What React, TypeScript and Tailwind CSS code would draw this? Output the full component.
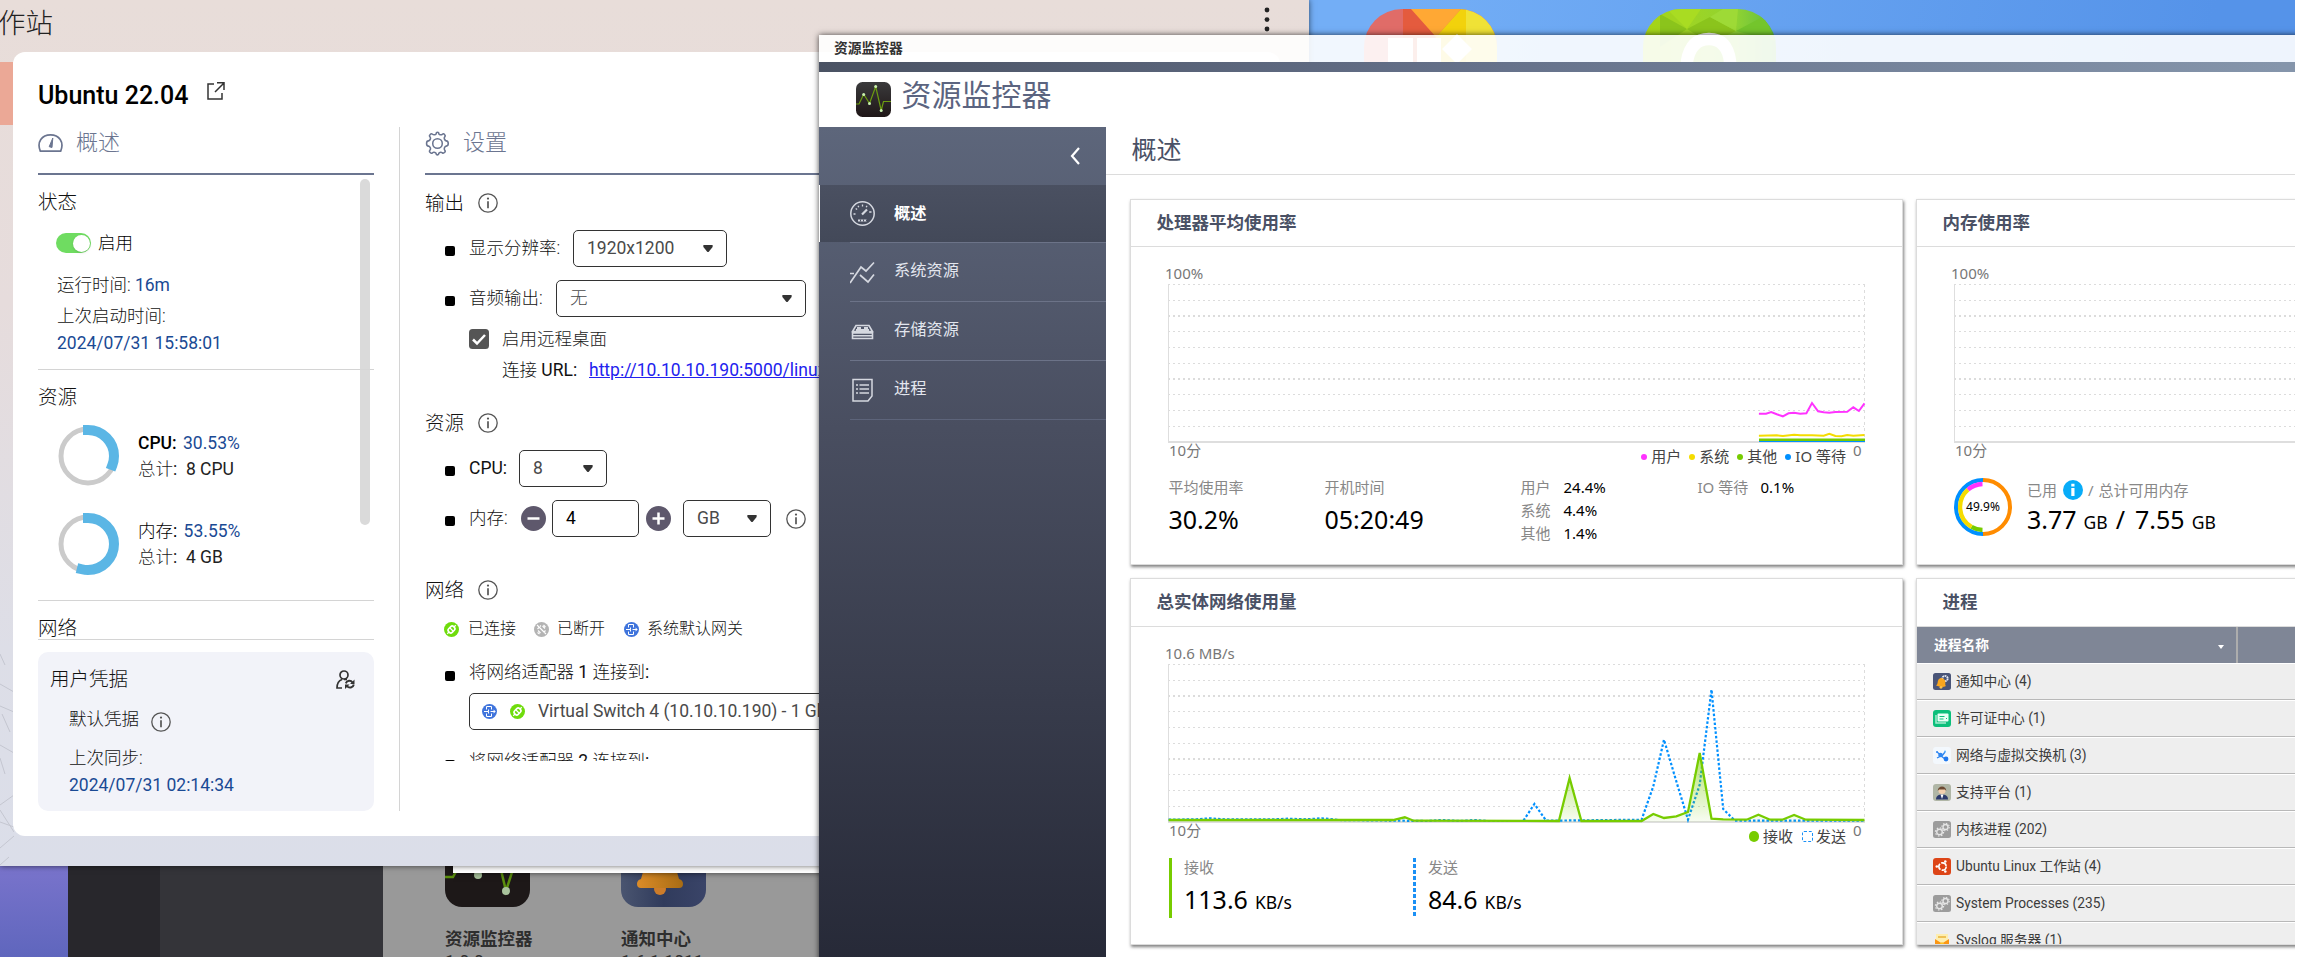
import type { ReactNode } from "react";

type Pt = [number, number];

const toPath = (pts: Pt[]) =>
  pts.map(([x, y], i) => `${i ? "L" : "M"}${((x - 95) / 1.96 + 0.6).toFixed(1)} ${((y - 313) / 3).toFixed(1)}`).join(" ");

/* ---------- small icons ---------- */

function Info({ className = "" }: { className?: string }) {
  return (
    <svg className={`h-5 w-5 shrink-0 ${className}`} viewBox="0 0 20 20" fill="none" stroke="#555" strokeWidth="1.3">
      <circle cx="10" cy="10" r="9.2" />
      <path d="M10 8.2V15.2" strokeWidth="1.7" />
      <circle cx="10" cy="5.6" r="1.1" fill="#555" stroke="none" />
    </svg>
  );
}

function Plug({ className = "" }: { className?: string }) {
  return (
    <svg className={`h-[15px] w-[15px] shrink-0 ${className}`} viewBox="0 0 15 15">
      <circle cx="7.5" cy="7.5" r="7.5" fill="#6fdc0c" />
      <g transform="rotate(-45 7.5 7.5)" fill="none" stroke="#fff" strokeWidth="1.6">
        <rect x="4" y="5" width="7" height="5" rx="2" />
        <path d="M1.5 7.5H4M11 7.5h2.5M7.5 5v5" strokeWidth="1.2" />
      </g>
    </svg>
  );
}

function Unplugged({ className = "" }: { className?: string }) {
  return (
    <svg className={`h-[15px] w-[15px] shrink-0 ${className}`} viewBox="0 0 15 15">
      <circle cx="7.5" cy="7.5" r="7.5" fill="#b4b4b4" />
      <g fill="none" stroke="#fff" strokeWidth="1.1">
        <path d="M3 3l9 9M4 8.5l2.5 2.5M3.5 10.5l2 1.5M8.5 4l2.5 2.5M9.5 3l2 2M3.5 7l1.5-1.5M10 10l1.5-1.5M6 4.5L7 3.5" />
      </g>
    </svg>
  );
}

function Gateway({ className = "" }: { className?: string }) {
  return (
    <svg className={`h-[15px] w-[15px] shrink-0 ${className}`} viewBox="0 0 15 15">
      <circle cx="7.5" cy="7.5" r="7.5" fill="#3f74dc" />
      <g fill="none" stroke="#fff" strokeWidth="1">
        <path d="M4.500 5.500v-3h5v3M4.500 9.500v3h5v-3M2 7.500h4.500v-2M6.500 7.500v2M8.500 7.500H13M11.500 5.800L13 7.500l-1.500 1.700" />
      </g>
    </svg>
  );
}

function Caret() {
  return (
    <svg className="h-[7px] w-[10px] shrink-0" viewBox="0 0 10 7">
      <path d="M.3.6Q.4 0 1 0h8q.6 0 .7.6L9.6 2 6 6.4Q5 7.4 4 6.4L.4 2z" fill="#333" />
    </svg>
  );
}

function MonitorIcon({ className = "" }: { className?: string }) {
  return (
    <svg className={className} viewBox="0 0 35 35">
      <defs>
        <linearGradient id="mi" x1="0" y1="0" x2="0" y2="1">
          <stop offset="0" stopColor="#3a3a3c" />
          <stop offset="1" stopColor="#1f1617" />
        </linearGradient>
      </defs>
      <rect width="35" height="35" rx="6.5" fill="url(#mi)" />
      <path d="M0 22h3l4.700-9.700L13.500 21.500 19.700 4.500 25.200 28.500 27.500 19.500H35" fill="none" stroke="#6c9c10" strokeWidth="1.2" />
      <g fill="#c9f0b0">
        <circle cx="7.700" cy="12.500" r="1.500" />
        <circle cx="13.500" cy="21.500" r="1.500" />
        <circle cx="19.700" cy="4.500" r="1.500" />
        <circle cx="25.200" cy="28.500" r="1.500" />
      </g>
    </svg>
  );
}

/* ---------- station window ---------- */

function Bullet({ className = "" }: { className?: string }) {
  return <span className={`ml-5 mr-[14px] h-[10px] w-[10px] shrink-0 rounded-[2px] bg-black ${className}`} />;
}

function Select({ className, children }: { className: string; children: ReactNode }) {
  return (
    <div className={`flex h-[37px] shrink-0 items-center justify-between rounded-[5px] border border-[#333] pl-[13px] pr-[13px] text-[#4a4a4a] ${className}`}>
      <span>{children}</span>
      <Caret />
    </div>
  );
}

function Usage({ pct, label, total, bold, className }: { pct: number; label: string; total: string; bold?: boolean; className: string }) {
  const c = 2 * Math.PI * 26;
  return (
    <div className={`flex h-[62px] shrink-0 pl-[19px] ${className}`}>
      <svg className="h-[62px] w-[62px]" viewBox="0 0 62 62" fill="none">
        <circle cx="31" cy="31" r="27" stroke="#cbcbcb" strokeWidth="5" />
        <circle
          cx="31"
          cy="31"
          r="26"
          stroke="#5bb6e5"
          strokeWidth="10"
          strokeLinecap="square"
          strokeDasharray={`${(c * pct) / 100} ${c}`}
          transform="rotate(-90 31 31)"
        />
      </svg>
      <div className="ml-[19px] pt-[5px]">
        <div className="h-[26px] leading-[26px]">
          <span className={bold ? "font-medium text-black" : "text-black"}>{label}:</span>{" "}
          <span className="ml-[2px] text-[#1a4a94]">{pct}%</span>
        </div>
        <div className="h-[26px] leading-[26px] text-[#222]">总计:&nbsp; {total}</div>
      </div>
    </div>
  );
}

function StationWindow() {
  return (
    <div className="absolute left-0 top-0 h-[866px] w-[1309px] bg-[linear-gradient(180deg,#e8ddd9_0%,#e6dcdc_35%,#dddee7_75%,#dbdee9_100%)] font-['Roboto','Noto_Sans_CJK_SC_Light','Noto_Sans_CJK_SC',sans-serif] text-[17.5px] text-[#111] shadow-[0_0_6px_rgba(0,0,0,0.6)]">
      <div className="absolute left-[-2px] top-[1px] h-[46px] whitespace-nowrap text-[27.5px] font-light leading-[46px] text-[#222]">作站</div>
      <div className="absolute left-0 top-[62px] h-[63px] w-[13px] bg-[#eba896]" />
      <svg className="absolute left-0 top-[640px] h-[226px] w-[14px]" viewBox="0 0 14 226" fill="none" stroke="#c4c6d0" strokeWidth="1">
        <path d="M0 14l5 11M0 44l14 8M0 66l14 6M2 74l8 18M0 105l14 8M0 118l5 16M0 165l14-10M0 170l14 22M0 182l14 5M0 208l14-12M0 225l9-8" />
      </svg>
      <svg className="absolute left-[1263px] top-[5px] h-[30px] w-[8px]" viewBox="0 0 8 30" fill="#222">
        <circle cx="4" cy="5" r="2.400" />
        <circle cx="4" cy="14.600" r="2.400" />
        <circle cx="4" cy="24" r="2.400" />
      </svg>

      <div className="absolute left-[13px] top-[52px] flex h-[784px] w-[1267px] flex-col overflow-hidden rounded-[12px] bg-white pl-[25px]">
        <div className="flex h-[75px] items-start pt-[21px]">
          <h1 className="mt-[1px] h-[44px] w-[169px] whitespace-nowrap text-[25px] font-medium leading-[44px] text-black">Ubuntu 22.04</h1>
          <svg className="mt-[9px] h-[18px] w-[18px]" viewBox="0 0 18 18" fill="none" stroke="#333" strokeWidth="1.500">
            <path d="M7 2H1v15h14v-6M10 .8h7V8M17 1L8 10" />
          </svg>
        </div>
        <div className="flex h-[684px]">
          {/* overview */}
          <div className="flex w-[336px] flex-col">
            <div className="flex h-[46px] shrink-0 text-[22px] text-[#6b7590]">
              <svg className="mt-[7px] h-[18px] w-[25px]" viewBox="0 0 25 18" fill="none" stroke="#6b7590" strokeWidth="1.700">
                <path d="M2.300 17.100C-1.500 8 4 .9 12.500.9S26.500 8 22.700 17.100z" strokeLinejoin="round" />
                <path d="M14.800 4l-.8 9.500-2.800-.8z" fill="#6b7590" strokeWidth="1" />
              </svg>
              <span className="ml-[13px] mt-[1px] h-[30px] font-light leading-[30px]">概述</span>
            </div>
            <div className="h-[2px] shrink-0 bg-[#6b7590]" />
            <div className="relative flex h-[465px] shrink-0 flex-col overflow-hidden border-b border-[#d4d4d4]">
              <div className="mt-3 h-[30px] shrink-0 text-[19.500px] font-light leading-[32px]">状态</div>
              <div className="mt-[14px] flex h-6 shrink-0 items-center pl-[18px]">
                <span className="flex h-5 w-[35px] items-center justify-end rounded-full bg-[#6fdc61] pr-[1px]">
                  <span className="h-[17px] w-[17px] rounded-full bg-white shadow" />
                </span>
                <span className="ml-[7px] font-light leading-6 text-black">启用</span>
              </div>
              <div className="mt-[17px] h-[26px] shrink-0 pl-[19px] font-light leading-[26px]">
                运行时间: <span className="font-normal text-[#1a4a94]">16m</span>
              </div>
              <div className="mt-[5px] h-[26px] shrink-0 pl-[19px] font-light leading-[26px]">上次启动时间:</div>
              <div className="mt-[1px] h-[26px] shrink-0 pl-[19px] leading-[26px] text-[#1a4a94]">2024/07/31 15:58:01</div>
              <div className="mt-[13px] h-px shrink-0 bg-[#d4d4d4]" />
              <div className="mt-3 h-[30px] shrink-0 text-[19.500px] font-light leading-[32px]">资源</div>
              <Usage className="mt-[13px]" pct={30.53} label="CPU" total="8 CPU" bold />
              <Usage className="mt-[26px]" pct={53.55} label="内存" total="4 GB" />
              <div className="mt-[25px] h-px shrink-0 bg-[#d4d4d4]" />
              <div className="mt-3 h-[30px] shrink-0 text-[19.500px] font-light leading-[32px]">网络</div>
              <div className="absolute left-[322px] top-[4px] h-[346px] w-[10px] rounded-full bg-[#d6d6d6]/90" />
            </div>
            <div className="mt-[12px] flex h-[159px] shrink-0 flex-col rounded-[10px] bg-[#f2f3f9]">
              <div className="mt-3 flex h-[30px] items-center justify-between pl-3 pr-[19px] text-[19.500px] font-light leading-[30px]">
                <span className="pt-[2px]">用户凭据</span>
                <svg className="h-[19px] w-[19px]" viewBox="0 0 19 19" fill="none" stroke="#333" strokeWidth="1.700">
                  <circle cx="8" cy="5" r="4" />
                  <path d="M6 18H1c0-5 2-7.500 5-8.500M8 9.500h3" />
                  <path d="M9.800 13.300a3.800 3.800 0 0 1 6.700-.8M17.800 14.500a3.800 3.800 0 0 1-6.800 1.500" strokeWidth="2" />
                  <path d="M18.500 9.500v4.500h-4.500zM9 19v-4.500h4.500z" fill="#333" stroke="none" />
                </svg>
              </div>
              <div className="mt-3 flex h-[26px] items-center pl-[31px] font-light leading-[26px]">
                默认凭据
                <Info className="ml-[12px] mt-[5px]" />
              </div>
              <div className="mt-[13px] h-[26px] pl-[31px] font-light leading-[26px]">上次同步:</div>
              <div className="mt-[1px] h-[26px] pl-[31px] leading-[26px] text-[#1a4a94]">2024/07/31 02:14:34</div>
            </div>
          </div>
          <div className="ml-[25px] w-px shrink-0 bg-[#d4d4d4]" />
          {/* settings */}
          <div className="ml-[25px] flex h-[634px] w-[830px] flex-col overflow-hidden whitespace-nowrap">
            <div className="flex h-[46px] shrink-0 text-[22px] text-[#6b7590]">
              <svg className="mt-[4px] h-[25px] w-[25px]" viewBox="0 0 24 24" fill="none" stroke="#6b7590" strokeWidth="1.500" strokeLinejoin="round">
                <circle cx="12" cy="12" r="4.600" />
                <path d="M9.700 3.500Q11 3.200 11 1.600q1-.9 2 0 0 1.600 1.300 1.900 1.500.5 2.400-.4 1-1 2 .2 1.200 1.200.3 2.200-.8 1-.3 2.300.5 1.400 1.700 1.700 1.900.1 1.900 2.500t-1.900 2.500q-1.200.3-1.700 1.600-.5 1.400.3 2.400.9 1-.3 2.200-1 1-2.200.2-1-.9-2.300-.3-1.200.5-1.300 1.900-1 .9-2 0 0-1.600-1.200-1.900-1.500-.6-2.500.3-1.100.9-2.200-.2-1.200-1.200-.3-2.200.9-1 .4-2.400-.6-1.300-1.800-1.600-1.800 0-1.800-2.500t1.800-2.500q1.300-.3 1.800-1.700.5-1.300-.4-2.300-.9-1 .3-2.200 1.100-1.200 2.200-.2 1 .9 2.500.4z" />
              </svg>
              <span className="ml-[13px] mt-[1px] h-[30px] font-light leading-[30px]">设置</span>
            </div>
            <div className="h-[2px] shrink-0 bg-[#6b7590]" />
            <div className="mt-[13px] flex h-[30px] shrink-0 items-center text-[19.500px] font-light leading-[30px]">
              <span className="pt-[2px]">输出</span> <Info className="ml-[14px]" />
            </div>
            <div className="mt-3 flex h-[37px] shrink-0 items-center">
              <Bullet className="mt-[4px]" />
              <span className="w-[104px] font-light">显示分辨率:</span>
              <Select className="w-[154px]">1920x1200</Select>
            </div>
            <div className="mt-[13px] flex h-[37px] shrink-0 items-center">
              <Bullet className="mt-[4px]" />
              <span className="w-[87px] font-light">音频输出:</span>
              <Select className="w-[250px] font-light">无</Select>
            </div>
            <div className="mt-3 flex h-5 shrink-0 items-center pl-[44px] text-[#222]">
              <svg className="h-5 w-5" viewBox="0 0 20 20">
                <rect width="20" height="20" rx="3.500" fill="#555" />
                <path d="M4 10.500l4 4 8-8.500" fill="none" stroke="#fff" strokeWidth="2.500" />
              </svg>
              <span className="ml-[13px] font-light">启用远程桌面</span>
            </div>
            <div className="mt-2 flex h-[26px] shrink-0 items-center pl-[77px]">
              <span className="w-[87px]">连接 URL:</span>
              <span className="text-[#2222ee] underline">http://10.10.10.190:5000/linux-station/</span>
            </div>
            <div className="mt-[25px] flex h-[30px] shrink-0 items-center text-[19.500px] font-light leading-[30px]">
              <span className="pt-[2px]">资源</span> <Info className="ml-[14px]" />
            </div>
            <div className="mt-3 flex h-[37px] shrink-0 items-center">
              <Bullet className="mt-[4px]" />
              <span className="w-[50px]">CPU:</span>
              <Select className="w-[88px]">8</Select>
            </div>
            <div className="mt-[13px] flex h-[37px] shrink-0 items-center">
              <Bullet className="mt-[4px]" />
              <span className="w-[52px] font-light">内存:</span>
              <svg className="h-[25px] w-[25px]" viewBox="0 0 25 25">
                <circle cx="12.500" cy="12.500" r="12.500" fill="#5e586c" />
                <path d="M6.500 12.500h12" stroke="#fff" strokeWidth="2.500" />
              </svg>
              <span className="ml-[6px] flex h-[37px] w-[87px] items-center rounded-[5px] border border-[#333] pl-[13px] text-black">4</span>
              <svg className="ml-[7px] h-[25px] w-[25px]" viewBox="0 0 25 25">
                <circle cx="12.500" cy="12.500" r="12.500" fill="#5e586c" />
                <path d="M6.500 12.500h12M12.500 6.500v12" stroke="#fff" strokeWidth="2.500" />
              </svg>
              <span className="w-3" />
              <Select className="w-[88px]">GB</Select>
              <Info className="ml-[15px]" />
            </div>
            <div className="mt-[38px] flex h-[30px] shrink-0 items-center text-[19.500px] font-light leading-[30px]">
              <span className="pt-[1px]">网络</span> <Info className="ml-[14px]" />
            </div>
            <div className="mt-3 flex h-6 shrink-0 items-center pl-[19px] text-[16px] font-light">
              <Plug />
              <span className="ml-[9px] w-[66px]">已连接</span>
              <Unplugged />
              <span className="ml-[8px] w-[67px]">已断开</span>
              <Gateway />
              <span className="ml-[8px]">系统默认网关</span>
            </div>
            <div className="mt-[18px] flex h-[26px] shrink-0 items-center">
              <Bullet className="mt-[8px]" />
              将网络适配器 1 连接到:
            </div>
            <div className="ml-[44px] mt-2 flex h-[37px] w-[500px] shrink-0 items-center rounded-[5px] border border-[#333] pl-3 text-[#4a4a4a]">
              <Gateway />
              <Plug className="ml-[13px]" />
              <span className="ml-[13px] tracking-[-0.04px]">Virtual Switch 4 (10.10.10.190) - 1 GbE</span>
            </div>
            <div className="mt-[18px] flex h-[26px] shrink-0 items-center">
              <Bullet className="mt-[8px]" />
              将网络适配器 2 连接到:
            </div>
          </div>
        </div>
      </div>
    </div>
  );
}

/* ---------- resource monitor ---------- */

const gridYs = [0, 16, 31.5, 47, 63, 79, 94.5, 110, 126, 142];

function Plot({ open, children }: { open?: boolean; children?: ReactNode }) {
  return (
    <svg className="h-[160px] w-[697px] shrink-0 overflow-visible" viewBox="0 0 697 160" fill="none">
      <g stroke="#dcdcdc" strokeDasharray="2 3" shapeRendering="crispEdges">
        {gridYs.map((y, i) => (
          <path key={y} d={`M0 ${Math.floor(y) + (i === 2 || i === 6 ? 1 : 0.5)}H696`} strokeWidth={i === 2 || i === 6 ? 2 : 1} />
        ))}
        {!open && <path d="M696.500 0V158" strokeDasharray="3 3" />}
      </g>
      <path d="M.5 0V158" stroke="#dedede" />
      <path d="M0 158H697" stroke="#dedede" strokeWidth="2" />
      {children}
    </svg>
  );
}

const user: Pt[] = [[1252, 702], [1266, 702], [1276, 697], [1287, 704], [1299, 710], [1310, 701], [1321, 699], [1333, 702], [1345, 701], [1356, 670], [1368, 695], [1379, 698], [1390, 699], [1402, 697], [1425, 696], [1437, 683], [1448, 694], [1459, 671]];
const sys: Pt[] = [[1252, 768], [1287, 767], [1299, 769], [1321, 765], [1333, 767], [1356, 767], [1379, 768], [1390, 762], [1402, 769], [1414, 770], [1425, 766], [1437, 768], [1459, 766]];
const received: Pt[] = [[95, 781], [535, 781], [558, 773], [575, 783], [860, 784], [881, 655], [904, 784], [1022, 784], [1045, 763], [1066, 775], [1090, 770], [1113, 757], [1136, 580], [1159, 777], [1182, 779], [1228, 780], [1251, 765], [1274, 780], [1298, 780], [1321, 766], [1344, 780], [1459, 781]];
const sent: Pt[] = [[95, 780], [150, 779], [175, 776], [205, 779], [300, 779], [330, 777], [365, 779], [395, 776], [430, 781], [600, 784], [630, 781], [665, 784], [697, 781], [720, 784], [790, 784], [812, 733], [835, 783], [1022, 780], [1045, 680], [1066, 540], [1090, 665], [1113, 780], [1136, 675], [1159, 390], [1182, 748], [1205, 783], [1459, 783]];

function Card({ title, className, headClass = "h-[47px]", children }: { title: string; className: string; headClass?: string; children: ReactNode }) {
  return (
    <section className={`flex shrink-0 flex-col overflow-hidden border border-[#dcdcdc] bg-white shadow-[1px_2px_3px_rgba(0,0,0,0.5)] ${className}`}>
      <h3 className={`flex shrink-0 items-center border-b border-[#dcdcdc] pb-[2px] pl-[25.500px] text-[17.500px] font-bold text-[#4a5165] ${headClass}`}>{title}</h3>
      {children}
    </section>
  );
}

function Axis({ legend }: { legend?: ReactNode }) {
  return (
    <div className="ml-[38px] flex h-[24px] w-[697px] items-start text-[15px] leading-[13px] text-[#777]">
      <span className="grow">10分</span>
      {legend}
    </div>
  );
}

const dots = [
  { c: "bg-[#ff33ff]", t: "用户" },
  { c: "bg-[#f5dc00]", t: "系统" },
  { c: "bg-[#77cc00]", t: "其他" },
  { c: "bg-[#0090ff]", t: "IO 等待" },
];

function CpuCard() {
  return (
    <Card title="处理器平均使用率" className="h-[366px] w-[773px]">
      <div className="h-[37px] pl-[34px] pt-[14px] text-[15px] leading-6 text-[#777]">100%</div>
      <div className="ml-[37px]">
        <Plot>
          <path d="M591 157.500H697" stroke="#0090ff" strokeWidth="1" />
          <path d="M591 155.700H697" stroke="#77cc00" strokeWidth="2.500" />
          <path d={toPath(sys)} stroke="#f5dc00" strokeWidth="2" />
          <path d={toPath(user)} stroke="#ff33ff" strokeWidth="2" />
        </Plot>
      </div>
      <Axis
        legend={
          <>
            <span className="flex pt-[6px] text-[#444]">
              {dots.map((d) => (
                <span key={d.t} className="ml-[8px] flex items-center">
                  <i className={`mr-[4px] h-[6px] w-[6px] rounded-full ${d.c}`} />
                  {d.t}
                </span>
              ))}
            </span>
            <span className="ml-[7px] w-[13px]">0</span>
          </>
        }
      />
      <div className="mt-[7px] flex pl-[37.500px] text-[15px] text-[#888]">
        <div className="w-[156px]">
          <div className="h-6 leading-6">平均使用率</div>
          <div className="mt-[3px] h-[34px] text-[25px] leading-[34px] text-black">30.2%</div>
        </div>
        <div className="w-[196px]">
          <div className="h-6 leading-6">开机时间</div>
          <div className="mt-[3px] h-[34px] text-[25px] leading-[34px] text-black">05:20:49</div>
        </div>
        <div className="w-[177px]">
          {[["用户", "24.4%"], ["系统", "4.4%"], ["其他", "1.4%"]].map(([k, v]) => (
            <div key={k} className="flex h-[23px] leading-6">
              <span className="w-[43px]">{k}</span>
              <span className="text-black">{v}</span>
            </div>
          ))}
        </div>
        <div className="flex h-6 leading-6">
          <span className="w-[63px]">IO 等待</span>
          <span className="text-black">0.1%</span>
        </div>
      </div>
    </Card>
  );
}

function NetCard() {
  return (
    <Card title="总实体网络使用量" className="h-[367px] w-[773px]" headClass="h-[48px]">
      <div className="h-[37px] pl-[34px] pt-[14px] text-[15px] leading-6 text-[#777]">10.6 MB/s</div>
      <div className="ml-[37px]">
        <Plot>
          <defs>
            <linearGradient id="rx" x1="0" y1="85" x2="0" y2="158" gradientUnits="userSpaceOnUse">
              <stop offset="0" stopColor="#77cc00" stopOpacity=".6" />
              <stop offset="1" stopColor="#77cc00" stopOpacity=".05" />
            </linearGradient>
          </defs>
          <path d={toPath(sent)} stroke="#0090ff" strokeWidth="2.200" strokeDasharray="2.500 2" />
          <path d={`${toPath(received)} V158H0z`} fill="url(#rx)" />
          <path d={toPath(received)} stroke="#77cc00" strokeWidth="2.300" />
        </Plot>
      </div>
      <Axis
        legend={
          <>
            <span className="flex items-center pt-[6px] text-[#444]">
              <i className="mr-[4px] h-[11px] w-[10px] rounded-full bg-[#77cc00]" />
              接收
              <i className="ml-[9px] mr-[3px] h-[11px] w-[11px] rounded-[2px] border border-dashed border-[#1b90f5]" />
              发送
            </span>
            <span className="ml-[7px] w-[13px]">0</span>
          </>
        }
      />
      <div className="mt-[7px] flex pl-[37.500px] text-[15px] text-[#888]">
        <div className="flex w-[244px]">
          <span className="mt-[3px] h-[60px] w-[3px] bg-[#77cc00]" />
          <div className="ml-[12.500px]">
            <div className="h-6 leading-6">接收</div>
            <div className="mt-[3px] h-[34px] text-[25px] leading-[34px] text-black">
              113.6<span className="ml-[7px] text-[17.500px]">KB/s</span>
            </div>
          </div>
        </div>
        <div className="flex">
          <span className="mt-[3px] h-[60px] w-[3px] bg-[repeating-linear-gradient(180deg,#1b90f5_0_4px,#fff_4px_6px)]" />
          <div className="ml-[12.500px]">
            <div className="h-6 leading-6">发送</div>
            <div className="mt-[3px] h-[34px] text-[25px] leading-[34px] text-black">
              84.6<span className="ml-[7px] text-[17.500px]">KB/s</span>
            </div>
          </div>
        </div>
      </div>
    </Card>
  );
}

function MemCard() {
  return (
    <Card title="内存使用率" className="h-[366px] w-[773px]">
      <div className="h-[37px] pl-[34px] pt-[14px] text-[15px] leading-6 text-[#777]">100%</div>
      <div className="ml-[37px]">
        <Plot open />
      </div>
      <Axis />
      <div className="mt-[10px] flex pl-[37px] text-[15px] text-[#888]">
        <svg className="h-[58px] w-[58px]" viewBox="0 0 58 58" fill="none">
          <path d="M29 2A27 27 0 0 1 29 56" stroke="#ff8c00" strokeWidth="4" />
          <path d="M29 56A27 27 0 0 1 29 2" stroke="#0090ff" strokeWidth="4" />
          <path d="M28.500 52A23 23 0 0 1 17.500 48.900" stroke="#77cc00" strokeWidth="4.300" />
          <path d="M17.500 48.900A23 23 0 0 1 14 11.700" stroke="#f5dc00" strokeWidth="4.300" />
          <path d="M14 11.700A23 23 0 0 1 28.500 6" stroke="#ff33ff" strokeWidth="4.300" />
          <text x="29" y="33" textAnchor="middle" className="fill-black text-[12px]">49.9%</text>
        </svg>
        <div className="ml-[15px]">
          <div className="flex h-[24px] items-center leading-6">
            已用
            <svg className="ml-[6px] mr-[5px] h-5 w-5" viewBox="0 0 20 20">
              <circle cx="10" cy="10" r="10" fill="#08acf8" />
              <path d="M8.300 8H11.500V16H8.300zM8.300 3.800H11.500V6.500H8.300z" fill="#fff" />
            </svg>
            /<span className="ml-[5px]">总计可用内存</span>
          </div>
          <div className="h-[34px] whitespace-nowrap text-[25px] leading-[34px] text-black">
            3.77<span className="ml-[7px] text-[17.500px]">GB</span>
            <span className="ml-[8px] mr-[10px]">/</span>
            7.55<span className="ml-[7px] text-[17.500px]">GB</span>
          </div>
        </div>
      </div>
    </Card>
  );
}

const gears = (
  <>
    <rect width="18" height="17" rx="2.500" fill="#9c9c9c" />
    <g fill="none" stroke="#e6e6e6">
      <circle cx="6.500" cy="11" r="2.800" strokeWidth="1.400" />
      <circle cx="6.500" cy="11" r="4.100" strokeWidth="1.200" strokeDasharray="1.500 1.700" />
      <circle cx="12.500" cy="6" r="2.500" strokeWidth="1.300" />
      <circle cx="12.500" cy="6" r="3.700" strokeWidth="1.100" strokeDasharray="1.400 1.500" />
    </g>
  </>
);

const processes: { t: string; icon: ReactNode }[] = [
  {
    t: "通知中心 (4)",
    icon: (
      <>
        <rect width="18" height="17" rx="2.500" fill="#4a5578" />
        <circle cx="12" cy="5.500" r="2.700" fill="none" stroke="#e8ecf5" strokeWidth="1.800" strokeDasharray="1.800 .6" />
        <path d="M3 12.500c2.500-1.500 1-4.500 3-6.500s5-.5 6 1.500c1 2.500-.5 4 1 5.500-3 1.500-6 1-10-.5z" fill="#f9a61f" />
        <circle cx="8" cy="14.300" r="1.400" fill="#ffc24a" />
      </>
    ),
  },
  {
    t: "许可证中心 (1)",
    icon: (
      <>
        <rect width="18" height="17" rx="3" fill="#0cbf7b" />
        <path d="M3 5v8h10" fill="none" stroke="#a7ebd0" strokeWidth="1.500" />
        <rect x="4.500" y="3.500" width="11" height="8" rx="1" fill="#e9fff6" />
        <path d="M6.500 6.500h5M6.500 9h4M13 8.500h1" stroke="#0cbf7b" strokeWidth="1" />
      </>
    ),
  },
  {
    t: "网络与虚拟交换机 (3)",
    icon: (
      <>
        <rect width="18" height="17" rx="3" fill="#f3f8fd" />
        <path d="M4 5l5 4 3-4M4 11l4-2 4 3" stroke="#2f86f0" strokeWidth="1.300" fill="none" />
        <circle cx="7.500" cy="8" r="2.300" fill="#2f86f0" />
        <circle cx="13" cy="12" r="2.400" fill="#1f78ee" />
        <circle cx="4" cy="5" r="1" fill="#2f86f0" />
        <circle cx="12" cy="4.500" r="1" fill="#5fb4ff" />
      </>
    ),
  },
  {
    t: "支持平台 (1)",
    icon: (
      <>
        <rect width="18" height="17" rx="3" fill="#b0b6a6" />
        <circle cx="9" cy="6.500" r="3.600" fill="#f2cfae" />
        <path d="M4.700 7c0-6 8.600-6 8.600 0l-1.300-1.500H6z" fill="#6b4a33" />
        <path d="M3 15.500c0-4 3-5 6-5s6 1 6 5z" fill="#2c3a6c" />
        <path d="M7.500 10.500h3L9 15z" fill="#fff" />
      </>
    ),
  },
  { t: "内核进程 (202)", icon: gears },
  {
    t: "Ubuntu Linux 工作站 (4)",
    icon: (
      <>
        <rect width="18" height="17" rx="3" fill="#dd4517" />
        <circle cx="9.500" cy="8.500" r="3.700" fill="none" stroke="#fff" strokeWidth="1.700" strokeDasharray="6.500 1.300" />
        <circle cx="3.800" cy="8.500" r="1.300" fill="#fff" />
        <circle cx="12.300" cy="3.500" r="1.300" fill="#fff" />
        <circle cx="12.300" cy="13.500" r="1.300" fill="#fff" />
      </>
    ),
  },
  { t: "System Processes (235)", icon: gears },
  {
    t: "Syslog 服务器 (1)",
    icon: (
      <>
        <path d="M3 2h12v9H3z" fill="#fdeeb0" />
        <path d="M5 5h8" stroke="#e8b23a" strokeWidth="1.500" />
        <path d="M2 7l7 4.500L16 7v9H2z" fill="#fb9612" />
        <path d="M2 16l7-6 7 6z" fill="#ffc21f" />
      </>
    ),
  },
];

function ProcessCard() {
  return (
    <Card title="进程" className="h-[367px] w-[773px]" headClass="h-[48px]">
      <div className="flex h-[36px] shrink-0 items-center bg-[#7f8696] text-[13.750px] font-bold text-white">
        <span className="w-[301px] pl-[17px]">进程名称</span>
        <svg className="mt-[3px] h-[4px] w-[6px]" viewBox="0 0 6 4">
          <path d="M0 0h6L3 4z" fill="#fff" />
        </svg>
        <span className="ml-[12px] h-full w-[2px] bg-[#adadad]" />
      </div>
      <div className="flex flex-col font-['Roboto','Noto_Sans_CJK_SC',sans-serif] text-[13.750px] text-[#3c3c3c]">
        {processes.map((p, i) => (
          <div key={i} className="flex h-[37px] shrink-0 items-center border-b border-t border-b-[#b8b8b8] border-t-white bg-[#eee] pl-[16px]">
            <svg className="h-[17px] w-[18px]" viewBox="0 0 18 17">
              {p.icon}
            </svg>
            <span className="ml-[5px]">{p.t}</span>
          </div>
        ))}
      </div>
    </Card>
  );
}

function NavItem({ label, active, children }: { label: string; active?: boolean; children: ReactNode }) {
  return (
    <div className={active ? "h-[57px] border-l border-white bg-[linear-gradient(180deg,#4a5061,#434959)] pl-[30px]" : "h-[59px] pl-[31px]"}>
      <div className={`flex h-full items-center ${active ? "font-bold text-white" : "border-t border-[#6c7388] text-[#e3e6ee]"}`}>
        <svg className="h-[25px] w-[25px]" viewBox="0 0 25 25" fill="none" stroke="#d5d8e0" strokeWidth="1.500">
          {children}
        </svg>
        <span className={active ? "ml-[19px]" : "ml-[19px] pb-[3px]"}>{label}</span>
      </div>
    </div>
  );
}

function MonitorWindow() {
  return (
    <div className="absolute left-[819px] top-[35px] flex h-[930px] w-[1900px] flex-col font-['Noto_Sans','Noto_Sans_CJK_SC',sans-serif] shadow-[0_0_6px_rgba(0,0,0,0.7)]">
      <div className="flex h-[27px] shrink-0 items-center bg-white/90 pl-[15px] text-[13.750px] font-bold text-[#333]">资源监控器</div>
      <div className="h-[10px] shrink-0 bg-[linear-gradient(90deg,#4a5263,#65718a_35%,#8595ab_77%)]" />
      <div className="flex h-[55px] shrink-0 bg-white pl-[37px] pt-[10px]">
        <MonitorIcon className="h-[35px] w-[35px]" />
        <span className="ml-[10.500px] mt-[-9px] h-[44px] text-[30px] leading-[44px] text-[#5b6480]">资源监控器</span>
      </div>
      <div className="flex h-[838px] shrink-0 bg-white">
        <nav className="w-[287px] shrink-0 bg-[linear-gradient(180deg,#5d667b_0%,#494e60_36%,#262937_100%)] text-[16.250px]">
          <div className="flex h-[58px] items-center justify-end pr-[26px]">
            <svg className="h-[18px] w-[10px]" viewBox="0 0 10 18" fill="none" stroke="#fff" strokeWidth="2.200">
              <path d="M9 1L2 9l7 8" />
            </svg>
          </div>
          <NavItem label="概述" active>
            <circle cx="12.500" cy="12.500" r="11.700" />
            <path d="M12 13.500l5-5M8 19.500h9" strokeWidth="2.200" />
            <path d="M8 19.500h9" stroke="#4a5061" strokeDasharray="1 2" strokeWidth="2.200" strokeDashoffset="-2" />
            <path d="M3.500 13h2M5.700 7.500l1.400 1M12.500 3.500v2M8 4.800l.8 1.500M17 4.800l-.8 1.500M21.500 11h-2.300" strokeWidth="1.300" />
          </NavItem>
          <NavItem label="系统资源">
            <path d="M0 22L11 6l5 4 8-8.500M0 12.500h4M10 14l8 7 6-7.500" strokeWidth="1.700" transform="translate(0 1)" />
          </NavItem>
          <NavItem label="存储资源">
            <path d="M6 6.500h13l3.500 6H2.500zM2.500 14v5.500h20V14zM2.500 16.700h20" strokeWidth="1.600" />
            <path d="M7 9h4M14 9h4M6 11h13" strokeWidth="2" />
          </NavItem>
          <NavItem label="进程">
            <path d="M3 1.500h19V18l-4 5H3zM6 7h2M6 11h2M6 15h2M9.500 7H19M9.500 11H19M9.500 15H19" strokeWidth="1.500" />
          </NavItem>
          <div className="ml-[31px] h-px bg-[#5d647a]" />
        </nav>
        <main className="flex w-[1613px] shrink-0 flex-col">
          <h2 className="h-[48px] shrink-0 border-b border-[#dcdcdc] pl-[25.500px] text-[25px] leading-[45px] text-[#4a5165]">概述</h2>
          <div className="flex pl-[24px] pt-[24px]">
            <div className="flex flex-col gap-[13px]">
              <CpuCard />
              <NetCard />
            </div>
            <div className="ml-[13px] flex flex-col gap-[13px]">
              <MemCard />
              <ProcessCard />
            </div>
          </div>
        </main>
      </div>
    </div>
  );
}

/* ---------- desktop ---------- */

export default function App() {
  return (
    <div className="relative h-[957px] w-[2303px] overflow-hidden bg-white">
      <div className="absolute left-0 top-0 h-[957px] w-[2295px] overflow-hidden bg-[linear-gradient(100deg,#73aef6_57%,#5593e9_90%)]">
        <div className="absolute left-0 top-[800px] h-[157px] w-[68px] bg-[linear-gradient(180deg,#7a74cc_40%,#5f66bd)]" />

        <svg className="absolute left-[1364px] top-[9px] h-[133px] w-[133px]" viewBox="0 0 133 133">
          <defs>
            <clipPath id="r1">
              <rect width="133" height="133" rx="38" />
            </clipPath>
          </defs>
          <g clipPath="url(#r1)">
            <path d="M0 0h133v133H0z" fill="#e06c68" />
            <path d="M39 0h9l25 28L45 60H39z" fill="#e45b3e" />
            <path d="M47 0h50L72 28z" fill="#ffa834" />
            <path d="M97 0h5v60H48l24-32z" fill="#f2d20c" />
            <path d="M102 0h31v60h-31z" fill="#f0e236" />
          </g>
          <path d="M24 29h25v40H24zM53 29h24v40H53zM93 25l15 15-15 15-15-15z" fill="#fff" />
        </svg>
        <svg className="absolute left-[1643px] top-[9px] h-[133px] w-[133px]" viewBox="0 0 133 133">
          <defs>
            <linearGradient id="g2">
              <stop offset="0" stopColor="#a6d416" />
              <stop offset=".35" stopColor="#9ed424" />
              <stop offset=".7" stopColor="#90d332" />
              <stop offset="1" stopColor="#5cbb42" />
            </linearGradient>
            <clipPath id="r2">
              <rect width="133" height="133" rx="38" />
            </clipPath>
          </defs>
          <g clipPath="url(#r2)">
            <path d="M0 0h133v133H0z" fill="url(#g2)" />
            <path d="M17 5L44 20 17 38zM44 20L67 8l26 14-26 12z" fill="#8bc41c" />
            <path d="M24 0L44 20 58 0z" fill="#a9dc22" />
            <path d="M67 8L80 0h15l-2 22z" fill="#9eda36" />
            <path d="M93 22l28-15 12 25z" fill="#74c52c" />
          </g>
          <path d="M44 52Q48 30 66 30t21 22v30" fill="none" stroke="#fff" strokeWidth="12.500" strokeLinecap="round" />
        </svg>

        {/* app catalogue behind the windows */}
        <div className="absolute left-[68px] top-[700px] flex h-[257px] w-[1240px]">
          <div className="w-[92px] bg-[#28272c]" />
          <div className="w-[223px] bg-[#343439]" />
          <div className="flex w-[925px] bg-[#999] pl-[62px] pt-[122px] font-['Roboto','Noto_Sans_CJK_SC',sans-serif] text-[17.500px] text-[#2e2e2e]">
            <div className="w-[176px]">
              <svg className="h-[85px] w-[85px]" viewBox="0 0 85 85">
                <rect width="85" height="85" rx="17" fill="#1d1818" />
                <path d="M0 55h8L22 30 33 49 47 10 61 69 68 47h17" fill="none" stroke="#5b8f0e" strokeWidth="2.500" />
                <circle cx="33" cy="53" r="4" fill="#a9c39c" />
                <circle cx="61" cy="69" r="4" fill="#a9c39c" />
              </svg>
              <div className="mt-[19px] h-[26px] font-bold leading-[26px]">资源监控器</div>
              <div className="h-5 leading-5">1.0.0</div>
            </div>
            <div>
              <svg className="h-[85px] w-[85px]" viewBox="0 0 85 85">
                <defs>
                  <linearGradient id="bell" x1="0" y1="0" x2="1" y2="0">
                    <stop offset="0" stopColor="#dc8c28" />
                    <stop offset="1" stopColor="#a86c14" />
                  </linearGradient>
                  <linearGradient id="nb">
                    <stop offset="0" stopColor="#4a5570" />
                    <stop offset=".5" stopColor="#303b5c" />
                    <stop offset="1" stopColor="#3a4468" />
                  </linearGradient>
                </defs>
                <rect width="85" height="85" rx="17" fill="url(#nb)" />
                <circle cx="39" cy="67" r="6" fill="#cc7c2a" />
                <path d="M22 50h34l2 7q4 1 4 5t-4 4H20q-4 0-4-4t4-5z" fill="url(#bell)" />
              </svg>
              <div className="mt-[19px] h-[26px] font-bold leading-[26px]">通知中心</div>
              <div className="h-5 leading-5">1.6.1.1011</div>
            </div>
          </div>
        </div>

        <div className="absolute left-[453px] top-[700px] h-[173px] w-[500px] bg-white shadow-[0_0_6px_rgba(0,0,0,0.6)]" />
        <StationWindow />
        <MonitorWindow />
      </div>
    </div>
  );
}
